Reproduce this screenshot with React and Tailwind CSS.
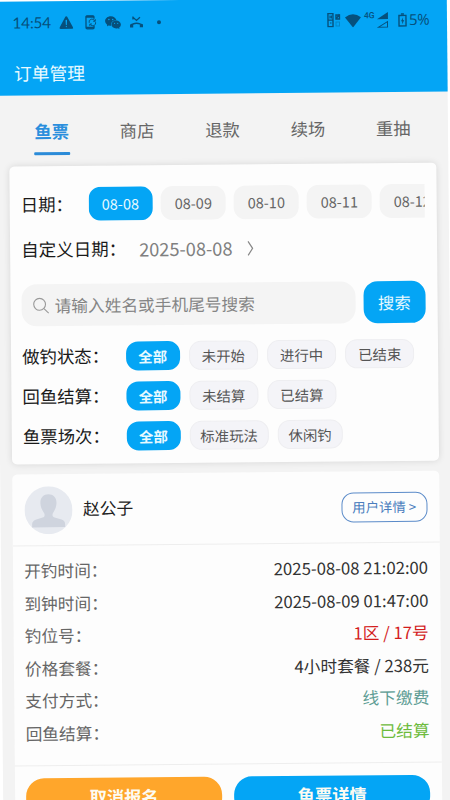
import React, { useState } from 'react';
import { IoWarning } from 'react-icons/io5';
import { AiFillWechat } from 'react-icons/ai';

const TABS = ['鱼票', '商店', '退款', '续场', '重抽'];
const DATES = ['08-08', '08-09', '08-10', '08-11', '08-12'];

const FILTERS = [
    { label: '做钓状态：', options: ['全部', '未开始', '进行中', '已结束'], pad: 'px-[12px]' },
    { label: '回鱼结算：', options: ['全部', '未结算', '已结算'], pad: 'px-[12px]' },
    { label: '鱼票场次：', options: ['全部', '标准玩法', '休闲钓'], pad: 'px-[9.8px]' },
];

const DETAILS = [
    { label: '开钓时间：', value: '2025-08-08 21:02:00', color: 'text-[#333333]' },
    { label: '到钟时间：', value: '2025-08-09 01:47:00', color: 'text-[#333333]' },
    { label: '钓位号：', value: '1区 / 17号', color: 'text-[#d31c1c]' },
    { label: '价格套餐：', value: '4小时套餐 / 238元', color: 'text-[#333333]' },
    { label: '支付方式：', value: '线下缴费', color: 'text-[#5f9d95]' },
    { label: '回鱼结算：', value: '已结算', color: 'text-[#6dbb3c]' },
];

const StatusBar = () => (
    <div className="flex h-[43px] items-center justify-between pl-[16.5px] pr-[17px] text-[#06507c]">
        <div className="flex items-center">
            <span className="w-[38px] font-['Lato'] text-[15.3px] tracking-[-0.2px]">14:54</span>
            <IoWarning className="ml-[7px] h-[17px] w-[17px]" />
            <svg className="ml-[9px] h-[15px] w-[13px]" viewBox="0 0 13 15" fill="none" stroke="currentColor" strokeWidth="1.3">
                <path d="M10 4V2.2Q10 1 8.8 1H3.2Q2 1 2 2.2V12.8Q2 14 3.2 14H8.8Q10 14 10 12.8V11" />
                <path d="M2 2H10M2 13H10" strokeWidth="2" />
                <path d="M5.2 8A2.9 2.9 0 0 1 10.8 6.4M11.6 7.4A2.9 2.9 0 0 1 6.3 9.6M11.3 4.3V6.5H9.2M5.8 11.3V9.2H8" strokeWidth="0.9" />
            </svg>
            <AiFillWechat className="ml-[7.5px] h-[18px] w-[18px]" />
            <svg className="ml-[6.5px] h-[14px] w-[15px]" viewBox="0 0 15 14" fill="none" stroke="currentColor">
                <path d="M4 1.8L7.5 5L11 1.8M4 1V4" strokeWidth="1.3" />
                <path d="M2 11.2Q1.6 9 4 8.5Q7.5 7.4 11 8.5Q13.4 9 13 11.2" strokeWidth="1.5" />
                <path d="M1 10.5H4.2M10.8 10.5H14" strokeWidth="3" />
            </svg>
            <span className="ml-[13px] h-[4px] w-[4px] rounded-full bg-current" />
        </div>
        <div className="flex items-center">
            <svg className="h-[15px] w-[14px]" viewBox="0 0 14 15" fill="none" stroke="currentColor">
                <path d="M1 1H6V14H1ZM1 7.5H6" strokeWidth="1.4" />
                <path d="M3 3V6M4.5 3V6M3 4.5H5M3 10.5H4.5" strokeWidth="1" />
                <path d="M9 2.5H12.5V6.5H9ZM12.5 1.5L9 6.5" strokeWidth="1.4" />
                <path d="M9 9.5H12.5V13.5H9Z" strokeWidth="1" opacity="0.35" />
            </svg>
            <svg className="ml-[4px] h-[14px] w-[16px]" viewBox="0 0 16 14" fill="currentColor">
                <path d="M8 14L0 4Q8 -2.5 16 4Z" />
            </svg>
            <span className="-mt-[8px] ml-[3px] w-[12px] font-['Roboto'] text-[8.5px] font-medium leading-[9px]">4G</span>
            <svg className="h-[16px] w-[13px]" viewBox="0 0 13 16" fill="currentColor">
                <path d="M12 0V7H1Z" />
                <path d="M11.5 9.5V15H2.5Z" fill="none" stroke="currentColor" strokeWidth="1" />
            </svg>
            <svg className="ml-[9px] h-[14px] w-[9px]" viewBox="0 0 9 14" fill="none" stroke="currentColor">
                <path d="M1 2.5H8V13H1Z" strokeWidth="1.4" />
                <path d="M3 1H6" strokeWidth="1.6" />
                <path d="M5 4.5L3 8.2H4.2V11.2L6.2 7.2H4.8Z" fill="currentColor" stroke="none" />
            </svg>
            <span className="ml-[2px] w-[21px] font-['Open_Sans'] text-[15px] tracking-[-0.4px]">5%</span>
        </div>
    </div>
);

const Avatar = () => (
    <svg className="h-[48px] w-[48px]" viewBox="0 0 48 48">
        <circle cx="24" cy="24" r="24" fill="#e7eaf0" />
        <path d="M24 8C29 8 32.5 11.5 32 17.5C31.7 22 29.5 25 28.3 27C27.5 29.5 28 30.5 30 31.2L37 33.5Q40.5 35 40.5 38V41H7.5V38Q7.5 35 11 33.5L18 31.2C20 30.5 20.5 29.5 19.7 27C18.5 25 16.3 22 16 17.5C15.5 11.5 19 8 24 8Z" fill="#cfd4de" />
    </svg>
);

const App = () => {
    const [tab, setTab] = useState('鱼票');
    const [date, setDate] = useState('08-08');
    const [selected, setSelected] = useState({});

    return (
        <div className="h-[800px] w-[450px] overflow-hidden bg-white font-['Noto_Sans_CJK_SC',sans-serif]">
            <div className="h-[812px] w-[451px] origin-top-left bg-[#f3f3f3] [transform:translate(-4.2px,1.7px)_rotate(-0.53deg)]">
                {/* Header */}
                <header className="h-[94px] bg-[#04a5f5]">
                    <StatusBar />
                    <h1 className="pl-[17.5px] pt-[14.5px] text-[17.8px] leading-[26px] text-[#e9faff]">订单管理</h1>
                </header>

                {/* Tabs */}
                <nav className="flex h-[71px] px-[12px] pt-[23px]">
                    {TABS.map((name) => (
                        <button key={name} type="button" onClick={() => setTab(name)} className="flex flex-1 flex-col items-center">
                            <span className={`text-[17.3px] leading-[26px] ${tab === name ? 'font-bold text-[#2b8fdd]' : 'text-[#666666]'}`}>{name}</span>
                            {tab === name && <span className="mt-[7.5px] h-[3.5px] w-[36px] rounded-[1px] bg-[#2b8bd8]" />}
                        </button>
                    ))}
                </nav>

                {/* Filter card */}
                <section className="mx-[12px] h-[297.5px] rounded-[5px] bg-[#fdfdfd] pl-[11px] pr-[12px] pt-[21px] text-[#1a1a1a] shadow-[0_0_7px_rgba(0,0,0,0.12)]">
                    <div className="flex h-[33.5px] items-center">
                        <span className="w-[67.5px] shrink-0 whitespace-nowrap text-[17.4px]">日期：</span>
                        <div className="flex flex-1 gap-[8.7px] overflow-hidden">
                            {DATES.map((d) => (
                                <button
                                    key={d}
                                    type="button"
                                    onClick={() => setDate(d)}
                                    className={`h-[33.5px] w-[64.3px] shrink-0 rounded-[12px] text-[14.5px] ${date === d ? 'bg-[#04a5f5] text-[#e9faff]' : 'bg-[#f4f4f4] text-[#666666]'}`}
                                >
                                    {d}
                                </button>
                            ))}
                        </div>
                    </div>

                    <div className="mt-[15px] flex h-[28px] items-center">
                        <span className="w-[118px] whitespace-nowrap text-[17.5px]">自定义日期：</span>
                        <span className="text-[18.2px] text-[#808080]">2025-08-08</span>
                        <svg className="ml-[15px] h-[16px] w-[7px]" viewBox="0 0 7 16" fill="none" stroke="#888888" strokeWidth="1.2">
                            <path d="M1 1L5.500 8L1 15" />
                        </svg>
                    </div>

                    <div className="mt-[20.8px] flex h-[42px] gap-[8px]">
                        <label className="flex flex-1 items-center rounded-[15px] bg-[#f4f4f4] pl-[11px]">
                            <svg className="h-[17px] w-[17px]" viewBox="0 0 17 17" fill="none" stroke="#999999" strokeWidth="1.1">
                                <circle cx="7" cy="7" r="5.900" />
                                <path d="M11.300 11.300L16 16" />
                            </svg>
                            <span className="ml-[5px] whitespace-nowrap text-[16.7px] text-[#858585]">请输入姓名或手机尾号搜索</span>
                        </label>
                        <button type="button" className="w-[62.5px] rounded-[14px] bg-[#04a5f5] text-[16.3px] text-[#e9faff]">搜索</button>
                    </div>

                    <div className="mt-[15.700px] flex flex-col gap-[11px]">
                        {FILTERS.map(({ label, options, pad }) => (
                            <div key={label} className="flex h-[29px] items-center">
                                <span className="w-[103.5px] whitespace-nowrap text-[17.4px]">{label}</span>
                                <div className="flex gap-[9px]">
                                    {options.map((option) => (
                                        <button
                                            key={option}
                                            type="button"
                                            onClick={() => setSelected({ ...selected, [label]: option })}
                                            className={`h-[29px] whitespace-nowrap rounded-[12px] text-[14.4px] ${
                                                (selected[label] || '全部') === option
                                                    ? 'bg-[#04a5f5] px-[12.7px] font-bold text-[#e9faff]'
                                                    : 'border border-[#eeeef1] bg-[#f4f4f8] text-[#555555] ' + pad
                                            }`}
                                        >
                                            {option}
                                        </button>
                                    ))}
                                </div>
                            </div>
                        ))}
                    </div>
                </section>

                {/* Order card */}
                <section className="mx-[12px] mt-[10.5px] h-[339px] rounded-t-[5px] bg-[#fdfdfd]">
                    <div className="flex h-[72px] items-center border-b border-[#eeeeee] pl-[11.5px] pr-[12px]">
                        <Avatar />
                        <span className="-mt-[2px] ml-[11px] flex-1 text-[16.8px] text-[#222222]">赵公子</span>
                        <button type="button" className="h-[30px] w-[86.5px] rounded-[12px] border border-[#5b8bc9] text-[13.4px] text-[#4a7dbd]">用户详情 &gt;</button>
                    </div>
                    <div className="h-[219.5px] border-b border-[#eeeeee] pl-[11px] pr-[12px] pt-[8.5px] text-[16.7px]">
                        {DETAILS.map(({ label, value, color }) => (
                            <div key={label} className="flex h-[32.5px] items-center justify-between">
                                <span className="text-[#666666]">{label}</span>
                                <span className={color}>{value}</span>
                            </div>
                        ))}
                    </div>
                    <div className="flex gap-[12px] pl-[11px] pr-[12px] pt-[12px] text-[17.2px] font-bold text-[#fdfbf2]">
                        <button type="button" className="h-[39px] flex-1 rounded-[18px] bg-[#ffa62b]">取消报名</button>
                        <button type="button" className="h-[39px] flex-1 rounded-[18px] bg-[#04a5f5]">鱼票详情</button>
                    </div>
                </section>
            </div>
        </div>
    );
};

export default App;
